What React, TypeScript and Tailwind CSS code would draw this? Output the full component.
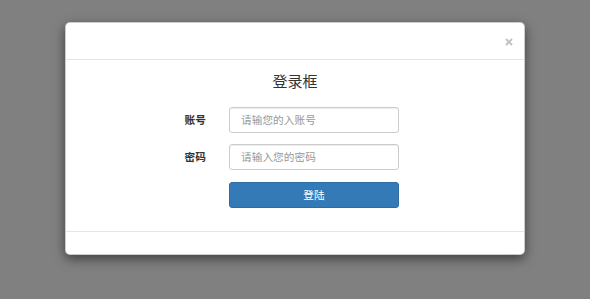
import React from "react";

export default function App() {
  const font = { fontFamily: '"Noto Sans CJK SC", "Noto Sans", sans-serif' };
  return (
    <div className="w-full h-[299px] bg-[#808080] overflow-hidden pt-[22px]" style={font}>
      <div className="mx-auto w-[460px] bg-white rounded-[5px] border border-[rgba(0,0,0,0.2)] shadow-[0_4px_12px_rgba(0,0,0,0.5)] flex flex-col">
        <div className="h-[37px] border-b border-[#e5e5e5] flex items-center justify-end pr-[11px]">
          <svg width="8" height="8" viewBox="0 0 8 8" className="mt-[1px]">
            <path d="M1 1L7 7M7 1L1 7" stroke="#c4c4c4" strokeWidth="2" strokeLinecap="butt" />
          </svg>
        </div>
        <div className="h-[171px] flex flex-col pt-[11px]">
          <div className="h-[20px] leading-[20px] text-center text-[15px] text-[#333]">登录框</div>
          <div className="mt-[16px] flex flex-col">
            <div className="flex items-center h-[26px]">
              <label className="w-[140px] text-right text-[10.7px] font-bold text-[#333] pr-[0px]">账号</label>
              <div className="ml-[23px] w-[170px] h-[26px] border border-[#ccc] rounded-[3px] shadow-[inset_0_1px_1px_rgba(0,0,0,0.075)] flex items-center px-[11px] text-[10.7px] text-[#999]">
                请输您的入账号
              </div>
            </div>
            <div className="flex items-center h-[26px] mt-[11px]">
              <label className="w-[140px] text-right text-[10.7px] font-bold text-[#333]">密码</label>
              <div className="ml-[23px] w-[170px] h-[26px] border border-[#ccc] rounded-[3px] shadow-[inset_0_1px_1px_rgba(0,0,0,0.075)] flex items-center px-[11px] text-[10.7px] text-[#999]">
                请输入您的密码
              </div>
            </div>
            <div className="flex items-center h-[26px] mt-[12px]">
              <div className="w-[140px]" />
              <div className="ml-[23px] w-[170px] h-[26px] bg-[#337ab7] border border-[#2e6da4] rounded-[3px] flex items-center justify-center text-[10.7px] text-white">
                登陆
              </div>
            </div>
          </div>
        </div>
        <div className="h-[23px] border-t border-[#e5e5e5]" />
      </div>
    </div>
  );
}
